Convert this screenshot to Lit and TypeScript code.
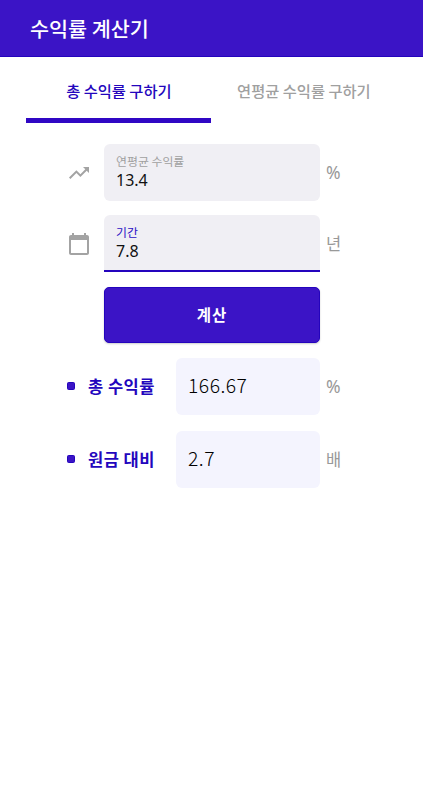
import { LitElement, html, css, svg } from "lit";
import { customElement } from "lit/decorators.js";

const trend = svg`<path d="M16 6l2.29 2.29-4.88 4.88-4-4L2 16.59 3.41 18l6-6 4 4 6.3-6.29L22 12V6z"/>`;
const calendar = svg`<path d="M20 3h-1V1h-2v2H7V1H5v2H4c-1.1 0-2 .9-2 2v16c0 1.1.9 2 2 2h16c1.1 0 2-.9 2-2V5c0-1.1-.9-2-2-2zm0 18H4V8h16v13z"/>`;

@customElement("app-root")
export class AppRoot extends LitElement {
  static styles = css`
    :host {
      display: block;
      height: 800px;
      overflow: hidden;
      background: #fff;
      font-family: "Noto Sans CJK KR", sans-serif;
      color: #111;
      line-height: 1;
    }
    * { box-sizing: border-box; }
    header {
      height: 57px;
      padding: 0 0 0 30px;
      display: flex;
      align-items: center;
      background: #3b14c6;
      border-bottom: 1px solid #2404bd;
      color: #fff;
      font-size: 20.7px;
      font-weight: 500;
    }
    nav {
      height: 65.5px;
      padding: 0 26.4px;
      display: grid;
      grid-template-columns: 185px 185px;
    }
    .tab {
      display: flex;
      align-items: center;
      justify-content: center;
      padding-top: 6px;
      border-bottom: 5px solid transparent;
      font-size: 15.3px;
      font-weight: 500;
      color: #a0a0a0;
      white-space: nowrap;
    }
    .tab.on { color: #2306bd; border-color: #3007c4; }
    main { padding: 21.5px 0 0 66px; }
    .row { display: flex; align-items: center; height: 57px; }
    .icon { width: 38px; display: flex; padding-left: 1px; }
    .icon svg { width: 24px; height: 24px; fill: #a3a3a3; }
    .field {
      width: 216px;
      height: 57px;
      padding: 11px 12px 0;
      border-radius: 6px;
      background: #f0eff4;
    }
    .focus { border-radius: 6px 6px 0 0; border-bottom: 2px solid #2404bd; }
    .label { font-size: 11.9px; line-height: 12px; color: #a0a0a0; }
    .focus .label { color: #2b0fc4; }
    .value {
      font-family: "Noto Sans", sans-serif;
      font-size: 16px;
      line-height: 16px;
      margin-top: 5px;
    }
    .unit { margin-left: 6px; font-size: 16.5px; color: #999; }
    .percent { font-family: "Noto Sans", sans-serif; font-size: 17.5px; }
    button {
      display: flex;
      align-items: center;
      justify-content: center;
      width: 216px;
      height: 56px;
      margin: 15px 0 15px 38px;
      padding: 0;
      border: 1px solid #2404bd;
      border-radius: 5px;
      background: #3b14c6;
      box-shadow: 0 1px 2px #0003;
      color: #fff;
      font: 700 15.5px/1 "Noto Sans CJK KR", sans-serif;
      letter-spacing: 1px;
    }
    .dot {
      width: 8px;
      height: 8px;
      margin: 0 13px 1px 1px;
      border-radius: 1.5px;
      background: #3b14c6;
      border: 1px solid #2404bd;
    }
    .name {
      width: 88px;
      padding-bottom: 1px;
      font-size: 16.5px;
      font-weight: 700;
      letter-spacing: 0.5px;
      color: #2306bd;
      white-space: nowrap;
    }
    .out {
      width: 144px;
      height: 57px;
      padding: 0 0 1px 12px;
      display: flex;
      align-items: center;
      border-radius: 6px;
      background: #f4f4fe;
      font-size: 19.3px;
      font-weight: 300;
      letter-spacing: 0.5px;
      color: #000;
    }
    .gap14 { margin-top: 14px; }
    .gap16 { margin-top: 16px; }
  `;

  render() {
    return html`
      <header>수익률 계산기</header>
      <nav>
        <div class="tab on">총 수익률 구하기</div>
        <div class="tab">연평균 수익률 구하기</div>
      </nav>
      <main>
        <div class="row">
          <div class="icon"><svg viewBox="0 0 24 24">${trend}</svg></div>
          <div class="field"><div class="label">연평균 수익률</div><div class="value">13.4</div></div>
          <div class="unit percent">%</div>
        </div>
        <div class="row gap14">
          <div class="icon"><svg viewBox="0 0 24 24">${calendar}</svg></div>
          <div class="field focus"><div class="label">기간</div><div class="value">7.8</div></div>
          <div class="unit">년</div>
        </div>
        <button>계산</button>
        <div class="row">
          <div class="dot"></div><div class="name">총 수익률</div>
          <div class="out">166.67</div><div class="unit percent">%</div>
        </div>
        <div class="row gap16">
          <div class="dot"></div><div class="name">원금 대비</div>
          <div class="out">2.7</div><div class="unit">배</div>
        </div>
      </main>
    `;
  }
}
